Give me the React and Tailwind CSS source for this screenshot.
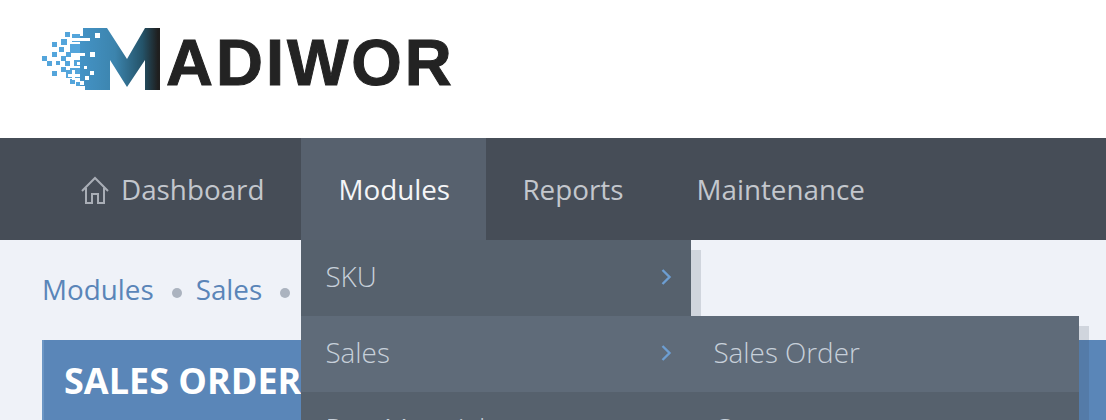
import React from "react";

const blueDots = [
  [42, 56, 5], [47, 61, 5], [52, 42, 5], [52, 52, 5], [52, 71, 5], [56, 61, 4], [59, 47, 5], [61, 56, 5],
  [61, 39, 6], [65, 32, 5], [66, 52, 5], [65, 61, 5], [61, 67, 5], [70, 79, 5], [66, 70, 8], [74, 60, 6],
  [70, 44, 10], [72, 34, 8], [76, 82, 4], [74, 48, 6], [70, 68, 10],
];

const whiteBits = [
  [71, 38, 19, 3], [71, 53, 14, 3], [95, 33, 5, 5], [90, 52, 5, 5], [77, 62, 3, 3], [84, 66, 3, 3],
  [72, 70, 3, 10], [68, 74, 12, 3], [90, 71, 4, 4], [85, 76, 4, 4], [80, 81, 4, 4], [80, 28, 3, 8],
  [80, 86, 5, 4],
];

const Logo = () => (
  <div className="flex items-start">
    <svg width="120" height="62" viewBox="42 28 120 62" className="shrink-0 blur-[0.5px]">
      <defs>
        <linearGradient id="m" x1="80" x2="158" y1="0" y2="0" gradientUnits="userSpaceOnUse">
          <stop offset="0" stopColor="#4493c6" />
          <stop offset="0.45" stopColor="#3c84ad" />
          <stop offset="0.8" stopColor="#245369" />
          <stop offset="1" stopColor="#1f1f1f" />
        </linearGradient>
      </defs>
      <path fill="url(#m)" d="M80 28H107L127 59L145 28H160V90H145V60L127 87L110 60V90H80Z" />
      {blueDots.map(([x, y, s]) => (
        <rect key={`${x}-${y}`} x={x} y={y} width={s} height={s} fill="#54a5db" />
      ))}
      {whiteBits.map(([x, y, w, h]) => (
        <rect key={`${x}-${y}`} x={x} y={y} width={w} height={h} fill="#ffffff" />
      ))}
    </svg>
    <span className="mt-[11px] ml-[4px] font-['Liberation_Sans',sans-serif] text-[65px] leading-[47px] font-bold tracking-[3px] text-[#232323] blur-[0.4px] [-webkit-text-stroke:1px_#232323]">
      ADIWOR
    </span>
  </div>
);

const HomeIcon = () => (
  <svg width="28" height="28" viewBox="0 0 28 28" fill="none" stroke="#a9aeb6" strokeWidth="2" className="mr-[12px] shrink-0">
    <path d="M1 15L14 2L27 15" />
    <path d="M5 12V27H11V18H17V27H23V12" />
  </svg>
);

const Chevron = () => (
  <svg width="11" height="16" viewBox="0 0 11 16" fill="none" stroke="#6d9ed2" strokeWidth="2.4" className="shrink-0">
    <path d="M1.5 1L8.5 8L1.5 15" />
  </svg>
);

const App = () => {
  return (
    <div className="relative h-[420px] w-[1106px] overflow-hidden bg-[#eff2f8] font-['Open_Sans',sans-serif]">
      <header className="flex h-[138px] items-start bg-white pt-[28px] pl-[42px]">
        <Logo />
      </header>

      <nav className="flex h-[102px] items-stretch bg-[#464d57] pl-[44px] text-[27.8px] text-[#c3c7cd]">
        <a className="flex items-center px-[37px] pt-[1px]"><HomeIcon />Dashboard</a>
        <div className="relative">
          <a className="flex h-full w-[185px] items-center bg-[#57616e] pt-[1px] pl-[37px] text-[#f4f5f7]">Modules</a>
          <div className="absolute top-full left-0 z-10 w-[390px] bg-[#56616d] font-light text-[#c7d0da] shadow-[10px_10px_0_rgba(60,70,90,0.17)]">
            <div className="flex h-[76px] items-center justify-between pr-[19px] pb-[3px] pl-[24px]">SKU<Chevron /></div>
            <div className="relative flex h-[76px] items-center justify-between bg-[#5f6b79] pr-[19px] pb-[3px] pl-[24px]">
              Sales<Chevron />
              <div className="absolute top-0 left-full w-[388px] bg-[#56616d] shadow-[10px_10px_0_rgba(60,70,90,0.17)]">
                <div className="flex h-[76px] items-center bg-[#5f6b79] px-[22px] pb-[3px]">Sales Order</div>
                <div className="flex h-[76px] items-center px-[22px] pb-[3px]">Customers</div>
              </div>
            </div>
            <div className="flex h-[76px] items-center justify-between pr-[19px] pb-[3px] pl-[24px]">Raw Materials<Chevron /></div>
          </div>
        </div>
        <a className="flex w-[173px] items-center pt-[1px] pl-[36px]">Reports</a>
        <a className="flex items-center pt-[1px] pl-[37px]">Maintenance</a>
      </nav>

      <main className="pl-[42px]">
        <div className="flex h-[100px] items-center gap-[18px] text-[27.8px] text-[#5a85b8]">
          <span>Modules</span>
          <span className="mt-[6px] -mr-[4px] size-[10px] rounded-full bg-[#abb3bf]" />
          <span>Sales</span>
          <span className="mt-[6px] -mr-[4px] size-[10px] rounded-full bg-[#abb3bf]" />
          <span>Sales Order</span>
        </div>
        <div className="h-[120px] border-l-[2px] border-[#6c96c4] bg-[#5a86b8] pt-[16px] pl-[20px] text-[36px] leading-[50px] font-bold whitespace-nowrap text-white">
          SALES ORDER
        </div>
      </main>
    </div>
  );
};

export default App;
